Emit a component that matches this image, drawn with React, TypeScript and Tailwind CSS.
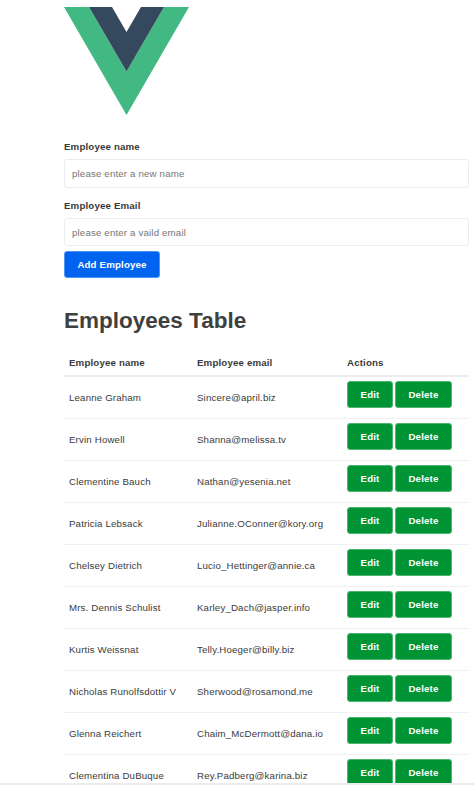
const employees = [
  { name: "Leanne Graham", email: "Sincere@april.biz" },
  { name: "Ervin Howell", email: "Shanna@melissa.tv" },
  { name: "Clementine Bauch", email: "Nathan@yesenia.net" },
  { name: "Patricia Lebsack", email: "Julianne.OConner@kory.org" },
  { name: "Chelsey Dietrich", email: "Lucio_Hettinger@annie.ca" },
  { name: "Mrs. Dennis Schulist", email: "Karley_Dach@jasper.info" },
  { name: "Kurtis Weissnat", email: "Telly.Hoeger@billy.biz" },
  { name: "Nicholas Runolfsdottir V", email: "Sherwood@rosamond.me" },
  { name: "Glenna Reichert", email: "Chaim_McDermott@dana.io" },
  { name: "Clementina DuBuque", email: "Rey.Padberg@karina.biz" },
];

function Logo() {
  return (
    <svg className="mt-[7px] block h-[108px] w-[125px]" viewBox="0 0 125 108" aria-label="Vue">
      <path d="M0 0h25l37.5 64.5L100 0h25L62.5 108z" fill="#42b883" />
      <path d="M25 0h23l14.5 25L77 0h23L62.5 64.5z" fill="#35495e" />
    </svg>
  );
}

function RowButton({ label, width }: { label: string; width: string }) {
  return (
    <button className={`h-[27px] rounded-[3px] border border-[#4db56f] bg-[#009435] leading-[25px] font-bold text-white ${width}`}>
      {label}
    </button>
  );
}

export default function App() {
  return (
    <div className="flex h-[785px] w-[474px] flex-col overflow-hidden border-b-2 border-[#ececec] bg-white font-['Liberation_Sans',Arial,sans-serif] text-[9.7px] tracking-[0.16px] text-[#3a3a3a]">
      <main className="ml-16 w-[405px]">
        <Logo />
        <form className="flex flex-col items-start" onSubmit={(e) => e.preventDefault()}>
          <label className="mt-[25px] h-[19px] leading-[14px] font-bold">Employee name</label>
          <input className="block h-[29px] w-full rounded-[3px] border border-[#ececec] px-[7px] placeholder:text-[#757575]" placeholder="please enter a new name" />
          <label className="mt-[11px] h-[19px] leading-[14px] font-bold">Employee Email</label>
          <input className="block h-7 w-full rounded-[3px] border border-[#ececec] px-[7px] placeholder:text-[#757575]" placeholder="please enter a vaild email" />
          <button className="mt-[5px] h-[27px] w-24 rounded-[3px] border border-[#4d94f5] bg-[#0064f0] pt-px font-bold text-white">Add Employee</button>
        </form>
        <h1 className="mt-[27px] text-[22.5px] leading-8 font-bold tracking-normal text-[#404040]">Employees Table</h1>
        <table className="mt-3 w-full table-fixed border-collapse">
          <colgroup>
            <col className="w-[128px]" />
            <col className="w-[150px]" />
            <col />
          </colgroup>
          <thead>
            <tr className="h-[27px] text-left">
              <th className="border-b-2 border-[#ececec] pt-[2px] pb-0 pl-[5px] font-bold">Employee name</th>
              <th className="border-b-2 border-[#ececec] pt-[2px] pb-0 pl-[5px] font-bold">Employee email</th>
              <th className="border-b-2 border-[#ececec] pt-[2px] pb-0 pl-[5px] font-bold">Actions</th>
            </tr>
          </thead>
          <tbody>
            {employees.map((e) => (
              <tr key={e.email} className="h-[42px] border-b border-[#f1f1f1]">
                <td className="pt-[2px] pb-0 pl-[5px] whitespace-nowrap">{e.name}</td>
                <td className="pt-[2px] pb-0 pl-[5px] whitespace-nowrap">{e.email}</td>
                <td className="pt-0 pb-[6px] pl-[5px]">
                  <div className="flex gap-[2px]">
                    <RowButton label="Edit" width="w-[46px]" />
                    <RowButton label="Delete" width="w-[57px]" />
                  </div>
                </td>
              </tr>
            ))}
          </tbody>
        </table>
      </main>
    </div>
  );
}
